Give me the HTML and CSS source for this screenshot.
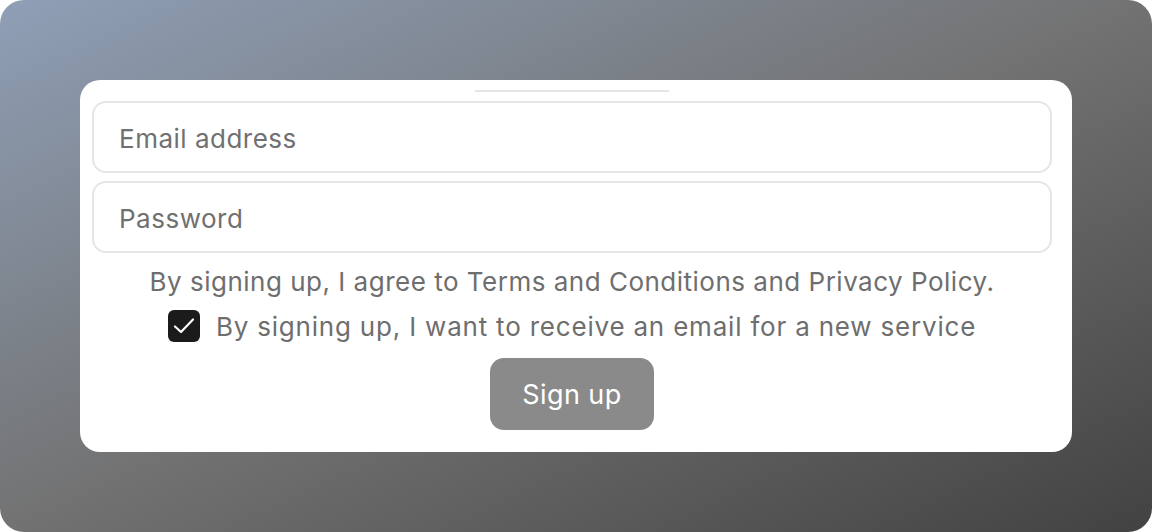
FILE: index.html
```html
<!DOCTYPE html>
<html>
<head>
<meta charset="utf-8">
<link rel="stylesheet" href="styles.css">
</head>
<body>
<div class="stage">
  <div class="sheet">
    <div class="handle"></div>
    <div class="field"><span class="placeholder">Email address</span></div>
    <div class="field"><span class="placeholder">Password</span></div>
    <p class="terms">By signing up, I agree to Terms and Conditions and Privacy Policy.</p>
    <label class="consent">
      <span class="box">
        <svg width="32" height="32" viewBox="0 0 32 32"><path d="M7 16.5 L13 22 L25 9.5" fill="none" stroke="#fff" stroke-width="2.2" stroke-linecap="round" stroke-linejoin="round"/></svg>
      </span>
      <span class="consent-text">By signing up, I want to receive an email for a new service</span>
    </label>
    <div class="actions"><button class="btn">Sign up</button></div>
  </div>
</div>
</body>
</html>
```
FILE: styles.css
```css
html, body {
  margin: 0;
  padding: 0;
  background: #ffffff;
}
body {
  width: 1152px;
  height: 532px;
  overflow: hidden;
  font-family: Inter, "Noto Sans", sans-serif;
}
.stage {
  width: 1152px;
  height: 532px;
  box-sizing: border-box;
  border-radius: 24px;
  padding: 80px 80px;
  background: linear-gradient(to bottom right, #8f9fb6 0%, #727272 50%, #424242 100%);
}
.sheet {
  box-sizing: border-box;
  width: 992px;
  height: 372px;
  background: #ffffff;
  border-radius: 20px;
  padding: 10px 20px 0 12px;
  display: flex;
  flex-direction: column;
}
.handle {
  width: 194px;
  height: 2px;
  background: #e6e6e6;
  align-self: center;
  margin-bottom: 9px;
}
.field {
  box-sizing: border-box;
  height: 72px;
  border: 2px solid #e6e6e6;
  border-radius: 14px;
  display: flex;
  align-items: center;
  padding-left: 25px;
  margin-bottom: 8px;
}
.placeholder {
  font-size: 26px;
  letter-spacing: 0.5px;
  color: #707070;
  margin-top: 2px;
}
.terms {
  margin: 1px 0 0;
  text-align: center;
  font-size: 26px;
  letter-spacing: 0.5px;
  line-height: 40px;
  color: #6e6e6e;
}
.consent {
  display: flex;
  align-items: center;
  justify-content: center;
  gap: 16px;
  height: 48px;
}
.box {
  width: 32px;
  height: 32px;
  border-radius: 6px;
  background: #1b1b1b;
  display: flex;
  align-items: center;
  justify-content: center;
}
.consent-text {
  font-size: 26px;
  letter-spacing: 0.8px;
  color: #6e6e6e;
}
.actions {
  display: flex;
  justify-content: center;
  margin-top: 8px;
}
.btn {
  width: 164px;
  height: 72px;
  border: none;
  border-radius: 14px;
  background: #8a8a8a;
  color: #ffffff;
  font-family: Inter, "Noto Sans", sans-serif;
  font-size: 27px;
  letter-spacing: 0.4px;
}
```
